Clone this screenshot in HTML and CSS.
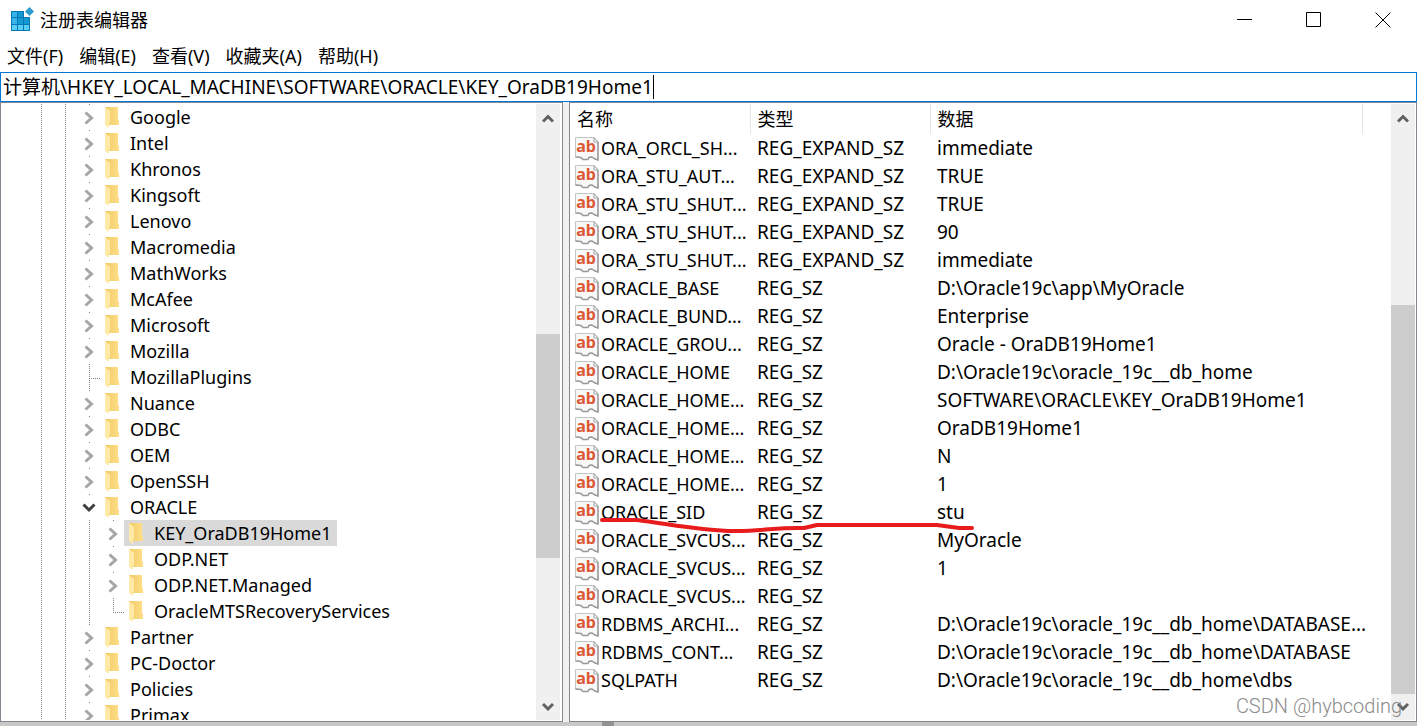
FILE: index.html
```html
<!DOCTYPE html>
<html lang="zh-CN">
<head>
<meta charset="utf-8">
<title>注册表编辑器</title>
<link rel="stylesheet" href="styles.css">
</head>
<body>
<svg class="defs" aria-hidden="true">
  <linearGradient id="gold" x1="0" x2="1"><stop offset="0" stop-color="#efc965"/><stop offset="1" stop-color="#ffdf88"/></linearGradient>
  <symbol id="folder" viewBox="0 0 14 22">
    <path d="M0 1h13v12l1 1v5H4z" fill="url(#gold)"/>
    <path d="M0 1l5 4v12l-1 1v4l-4-3z" fill="#ffe9a6"/>
  </symbol>
  <symbol id="right" viewBox="0 0 10 14"><path d="M1.500 1.500L7.500 7l-6 5.500" fill="none" stroke="#a6a6a6" stroke-width="3"/></symbol>
  <symbol id="down" viewBox="0 0 14 10"><path d="M1.500 1.500L7 7l5.500-5.500" fill="none" stroke="#404040" stroke-width="3"/></symbol>
  <symbol id="value" viewBox="0 0 24 24">
    <path d="M.5.500h18.500l4 4.500v18l-3-1-3-2-3 .5-1 2H8l-2-2-5.500-.5z" fill="#f8f8f8" stroke="#c4c4c4"/>
    <path d="M19 .5V5h4z" fill="#fff" stroke="#a0a0a0"/>
    <path d="M23 5v18l-3-1-3-2-3 .5-1 2H8l-2-2-5.500-.5" fill="none" stroke="#999" stroke-width="1.500"/>
    <text x="11" y="15" text-anchor="middle" class="ab">ab</text>
  </symbol>
</svg>

<header class="titlebar">
  <svg class="app-icon" viewBox="0 0 24 24" aria-hidden="true">
    <path d="M1 3h13v6h6v14H1z" fill="#0877b5"/>
    <path d="M2 4h5v5H2zM2 10h5v6H2z" fill="#35b5e8"/>
    <path d="M8 4h5v5H8zM8 10h5v6H8zM14 10h5v6h-5z" fill="#1499d3"/>
    <path d="M2 17h5v5H2zM8 17h5v5H8zM14 17h5v5h-5z" fill="#58cdf5"/>
    <path d="M19.500-1l4.500 4.500L19.500 8 15 3.500z" fill="#2d9bce"/>
  </svg>
  <h1 class="title">注册表编辑器</h1>
  <button class="win-btn" aria-label="最小化"><svg viewBox="0 0 16 16"><path d="M0 7.500h15"/></svg></button>
  <button class="win-btn" aria-label="最大化"><svg viewBox="0 0 16 16"><path d="M.5.500h14v14H.5z"/></svg></button>
  <button class="win-btn" aria-label="关闭"><svg viewBox="0 0 16 16"><path d="M.5.500l15 15M15.500.500l-15 15"/></svg></button>
</header>

<nav class="menu">
  <button>文件(F)</button><button>编辑(E)</button><button>查看(V)</button><button>收藏夹(A)</button><button>帮助(H)</button>
</nav>

<div class="address">
  <input class="path" type="text" aria-label="地址" value="计算机\HKEY_LOCAL_MACHINE\SOFTWARE\ORACLE\KEY_OraDB19Home1"><span class="caret"></span>
</div>

<main class="panes">
  <section class="pane tree-pane">
    <ul class="tree">
      <li><i class="g"></i><i class="g"></i><i class="t"><svg><use href="#right"/></svg></i><span class="key"><svg><use href="#folder"/></svg>Google</span></li>
      <li><i class="g"></i><i class="g"></i><i class="t"><svg><use href="#right"/></svg></i><span class="key"><svg><use href="#folder"/></svg>Intel</span></li>
      <li><i class="g"></i><i class="g"></i><i class="t"><svg><use href="#right"/></svg></i><span class="key"><svg><use href="#folder"/></svg>Khronos</span></li>
      <li><i class="g"></i><i class="g"></i><i class="t"><svg><use href="#right"/></svg></i><span class="key"><svg><use href="#folder"/></svg>Kingsoft</span></li>
      <li><i class="g"></i><i class="g"></i><i class="t"><svg><use href="#right"/></svg></i><span class="key"><svg><use href="#folder"/></svg>Lenovo</span></li>
      <li><i class="g"></i><i class="g"></i><i class="t"><svg><use href="#right"/></svg></i><span class="key"><svg><use href="#folder"/></svg>Macromedia</span></li>
      <li><i class="g"></i><i class="g"></i><i class="t"><svg><use href="#right"/></svg></i><span class="key"><svg><use href="#folder"/></svg>MathWorks</span></li>
      <li><i class="g"></i><i class="g"></i><i class="t"><svg><use href="#right"/></svg></i><span class="key"><svg><use href="#folder"/></svg>McAfee</span></li>
      <li><i class="g"></i><i class="g"></i><i class="t"><svg><use href="#right"/></svg></i><span class="key"><svg><use href="#folder"/></svg>Microsoft</span></li>
      <li><i class="g"></i><i class="g"></i><i class="t"><svg><use href="#right"/></svg></i><span class="key"><svg><use href="#folder"/></svg>Mozilla</span></li>
      <li><i class="g"></i><i class="g"></i><i class="g branch"></i><span class="key"><svg><use href="#folder"/></svg>MozillaPlugins</span></li>
      <li><i class="g"></i><i class="g"></i><i class="t"><svg><use href="#right"/></svg></i><span class="key"><svg><use href="#folder"/></svg>Nuance</span></li>
      <li><i class="g"></i><i class="g"></i><i class="t"><svg><use href="#right"/></svg></i><span class="key"><svg><use href="#folder"/></svg>ODBC</span></li>
      <li><i class="g"></i><i class="g"></i><i class="t"><svg><use href="#right"/></svg></i><span class="key"><svg><use href="#folder"/></svg>OEM</span></li>
      <li><i class="g"></i><i class="g"></i><i class="t"><svg><use href="#right"/></svg></i><span class="key"><svg><use href="#folder"/></svg>OpenSSH</span></li>
      <li><i class="g"></i><i class="g"></i><i class="t open"><svg><use href="#down"/></svg></i><span class="key"><svg><use href="#folder"/></svg>ORACLE</span></li>
      <li><i class="g"></i><i class="g"></i><i class="g"></i><i class="t"><svg><use href="#right"/></svg></i><span class="key selected"><svg><use href="#folder"/></svg>KEY_OraDB19Home1</span></li>
      <li><i class="g"></i><i class="g"></i><i class="g"></i><i class="t"><svg><use href="#right"/></svg></i><span class="key"><svg><use href="#folder"/></svg>ODP.NET</span></li>
      <li><i class="g"></i><i class="g"></i><i class="g"></i><i class="t"><svg><use href="#right"/></svg></i><span class="key"><svg><use href="#folder"/></svg>ODP.NET.Managed</span></li>
      <li><i class="g"></i><i class="g"></i><i class="g"></i><i class="g last"></i><span class="key"><svg><use href="#folder"/></svg>OracleMTSRecoveryServices</span></li>
      <li><i class="g"></i><i class="g"></i><i class="t"><svg><use href="#right"/></svg></i><span class="key"><svg><use href="#folder"/></svg>Partner</span></li>
      <li><i class="g"></i><i class="g"></i><i class="t"><svg><use href="#right"/></svg></i><span class="key"><svg><use href="#folder"/></svg>PC-Doctor</span></li>
      <li><i class="g"></i><i class="g"></i><i class="t"><svg><use href="#right"/></svg></i><span class="key"><svg><use href="#folder"/></svg>Policies</span></li>
      <li><i class="g"></i><i class="g"></i><i class="t"><svg><use href="#right"/></svg></i><span class="key"><svg><use href="#folder"/></svg>Primax</span></li>
    </ul>
    <div class="scroll">
      <svg class="arrow" viewBox="0 0 12 9"><path d="M1 7.500l5-5 5 5"/></svg>
      <div class="track"><div class="before-tree"></div><div class="thumb-tree"></div><div class="after-tree"></div></div>
      <svg class="arrow arrow-down" viewBox="0 0 12 9"><path d="M1 1.500l5 5 5-5"/></svg>
    </div>
  </section>

  <section class="pane list-pane">
    <div class="list">
      <table>
        <colgroup><col class="c-name"><col class="c-type"><col class="c-data"><col></colgroup>
        <thead><tr><th>名称</th><th>类型</th><th>数据</th><td></td></tr></thead>
        <tbody>
          <tr><td><svg><use href="#value"/></svg>ORA_ORCL_SH...</td><td>REG_EXPAND_SZ</td><td>immediate</td></tr>
          <tr><td><svg><use href="#value"/></svg>ORA_STU_AUT...</td><td>REG_EXPAND_SZ</td><td>TRUE</td></tr>
          <tr><td><svg><use href="#value"/></svg>ORA_STU_SHUT...</td><td>REG_EXPAND_SZ</td><td>TRUE</td></tr>
          <tr><td><svg><use href="#value"/></svg>ORA_STU_SHUT...</td><td>REG_EXPAND_SZ</td><td>90</td></tr>
          <tr><td><svg><use href="#value"/></svg>ORA_STU_SHUT...</td><td>REG_EXPAND_SZ</td><td>immediate</td></tr>
          <tr><td><svg><use href="#value"/></svg>ORACLE_BASE</td><td>REG_SZ</td><td>D:\Oracle19c\app\MyOracle</td></tr>
          <tr><td><svg><use href="#value"/></svg>ORACLE_BUND...</td><td>REG_SZ</td><td>Enterprise</td></tr>
          <tr><td><svg><use href="#value"/></svg>ORACLE_GROU...</td><td>REG_SZ</td><td>Oracle - OraDB19Home1</td></tr>
          <tr><td><svg><use href="#value"/></svg>ORACLE_HOME</td><td>REG_SZ</td><td>D:\Oracle19c\oracle_19c__db_home</td></tr>
          <tr><td><svg><use href="#value"/></svg>ORACLE_HOME...</td><td>REG_SZ</td><td>SOFTWARE\ORACLE\KEY_OraDB19Home1</td></tr>
          <tr><td><svg><use href="#value"/></svg>ORACLE_HOME...</td><td>REG_SZ</td><td>OraDB19Home1</td></tr>
          <tr><td><svg><use href="#value"/></svg>ORACLE_HOME...</td><td>REG_SZ</td><td>N</td></tr>
          <tr><td><svg><use href="#value"/></svg>ORACLE_HOME...</td><td>REG_SZ</td><td>1</td></tr>
          <tr><td><svg><use href="#value"/></svg>ORACLE_SID</td><td>REG_SZ</td><td>stu</td></tr>
          <tr><td><svg><use href="#value"/></svg>ORACLE_SVCUS...</td><td>REG_SZ</td><td>MyOracle</td></tr>
          <tr><td><svg><use href="#value"/></svg>ORACLE_SVCUS...</td><td>REG_SZ</td><td>1</td></tr>
          <tr><td><svg><use href="#value"/></svg>ORACLE_SVCUS...</td><td>REG_SZ</td><td></td></tr>
          <tr><td><svg><use href="#value"/></svg>RDBMS_ARCHI...</td><td>REG_SZ</td><td>D:\Oracle19c\oracle_19c__db_home\DATABASE...</td></tr>
          <tr><td><svg><use href="#value"/></svg>RDBMS_CONT...</td><td>REG_SZ</td><td>D:\Oracle19c\oracle_19c__db_home\DATABASE</td></tr>
          <tr><td><svg><use href="#value"/></svg>SQLPATH</td><td>REG_SZ</td><td>D:\Oracle19c\oracle_19c__db_home\dbs</td></tr>
        </tbody>
      </table>
      <svg class="mark" viewBox="0 0 376 16" aria-hidden="true"><path d="M3 4H38C70 8 110 16 138 15C165 15 180 11 205 12L218 9H338L360 12H373"/></svg>
    </div>
    <div class="scroll">
      <svg class="arrow" viewBox="0 0 12 9"><path d="M1 7.500l5-5 5 5"/></svg>
      <div class="track"><div class="before-list"></div><div class="thumb-list"></div></div>
      <svg class="arrow arrow-down" viewBox="0 0 12 9"><path d="M1 1.500l5 5 5-5"/></svg>
    </div>
  </section>
</main>
<footer class="edge"><span class="edge-mark"></span></footer>
<div class="watermark">CSDN @hybcoding</div>
</body>
</html>
```

FILE: styles.css
```css
* { box-sizing: border-box; }

body {
  margin: 0;
  height: 100vh;
  display: flex;
  flex-direction: column;
  overflow: hidden;
  background: #fff;
  color: #000;
  font: 18px/26px "Noto Sans", "Noto Sans CJK SC", sans-serif;
}

button, input { font: inherit; color: inherit; background: none; border: 0; padding: 0; }

.defs { position: absolute; width: 0; height: 0; }
.ab { font: bold 16px "Noto Sans", sans-serif; fill: #dc5836; }

.titlebar { display: flex; align-items: center; height: 40px; padding-left: 10px; flex: none; }
.app-icon { width: 24px; height: 24px; margin-right: 6px; overflow: visible; }
.title { flex: 1; margin: 0; font-size: 18px; font-weight: 400; }
.win-btn { width: 69px; height: 40px; display: flex; align-items: center; justify-content: center; }
.win-btn svg { width: 16px; height: 16px; fill: none; stroke: #000; }

.menu { display: flex; align-items: center; gap: 16px; height: 32px; padding-left: 7px; flex: none; }

.address { display: flex; align-items: center; height: 30px; padding-left: 2px; border: 1px solid #0078d7; flex: none; }
.path { field-sizing: content; outline: 0; height: 26px; font-size: 19px; }
.caret { width: 1px; height: 24px; background: #000; }

.panes { display: flex; gap: 6px; flex: 1; min-height: 0; background: #f0f0f0; }
.pane { display: flex; border: 1px solid #828790; background: #fff; overflow: hidden; padding: 1px 1px 1px 0; }
.tree-pane { width: 563px; flex: none; padding-right: 2px; }
.list-pane { flex: 1; min-width: 0; }

.tree { flex: 1; margin: 0; padding: 0 0 0 27px; list-style: none; overflow: hidden; }
.tree li { display: flex; height: 26px; }
.g, .t { width: 24px; height: 26px; flex: none; }
.g {
  background: repeating-linear-gradient(#808080 0 1px, transparent 1px 2px) 13px 0 / 1px 100% no-repeat;
}
.branch, .last {
  background:
    repeating-linear-gradient(#808080 0 1px, transparent 1px 2px) 13px 0 / 1px 100% no-repeat,
    repeating-linear-gradient(90deg, #808080 0 1px, transparent 1px 2px) 13px 14px / 11px 1px no-repeat;
}
.last { background-size: 1px 15px, 11px 1px; }
.t {
  display: flex;
  align-items: center;
  justify-content: center;
  padding: 2px 0 0 1px;
  background: linear-gradient(#808080, #808080) 13px 0 / 1px 1px no-repeat;
}
.t svg { width: 10px; height: 14px; }
.t.open svg { width: 14px; height: 10px; }
.key { display: flex; align-items: center; padding: 0 5px; white-space: nowrap; }
.key svg { width: 14px; height: 22px; margin-right: 11px; }
.selected { background: #d9d9d9; }

.scroll { display: flex; flex-direction: column; align-items: center; width: 24px; flex: none; background: #f0f0f0; }
.arrow { width: 12px; height: 29px; flex: none; fill: none; stroke: #606060; stroke-width: 3; }
.arrow-down { height: 26px; }
.track { display: flex; flex-direction: column; flex: 1; align-self: stretch; }
.before-tree { flex: 201; }
.thumb-tree { flex: 224; background: #cdcdcd; }
.after-tree { flex: 136; }
.before-list { flex: 172; }
.thumb-list { flex: 389; background: #cdcdcd; }

.list { flex: 1; min-width: 0; position: relative; overflow: hidden; }
table { width: 100%; table-layout: fixed; border-collapse: collapse; }
.c-name, .c-type { width: 180px; }
.c-data { width: 432px; }
th, td { height: 28px; padding: 0 0 0 7px; text-align: left; font-weight: 400; white-space: nowrap; }
th { height: 30px; border-right: 1px solid #e5e5e5; }
tbody td { font-size: 19px; }
tbody td:first-child { padding-left: 5px; font-size: 18px; }
td svg { width: 24px; height: 24px; margin-right: 2px; vertical-align: -6px; }

.mark { position: absolute; left: 29px; top: 412px; width: 376px; height: 16px; overflow: visible; fill: none; stroke: #e81c1c; stroke-width: 4; stroke-linecap: round; stroke-linejoin: round; }

.edge { height: 4px; flex: none; background: #c8c8c8; padding-left: 602px; }
.edge-mark { display: block; width: 12px; height: 4px; background: #929292; }

.watermark { position: absolute; right: 15px; bottom: 7px; font: 300 20px/26px Roboto, sans-serif; color: #808080; opacity: 0.9; }
```
